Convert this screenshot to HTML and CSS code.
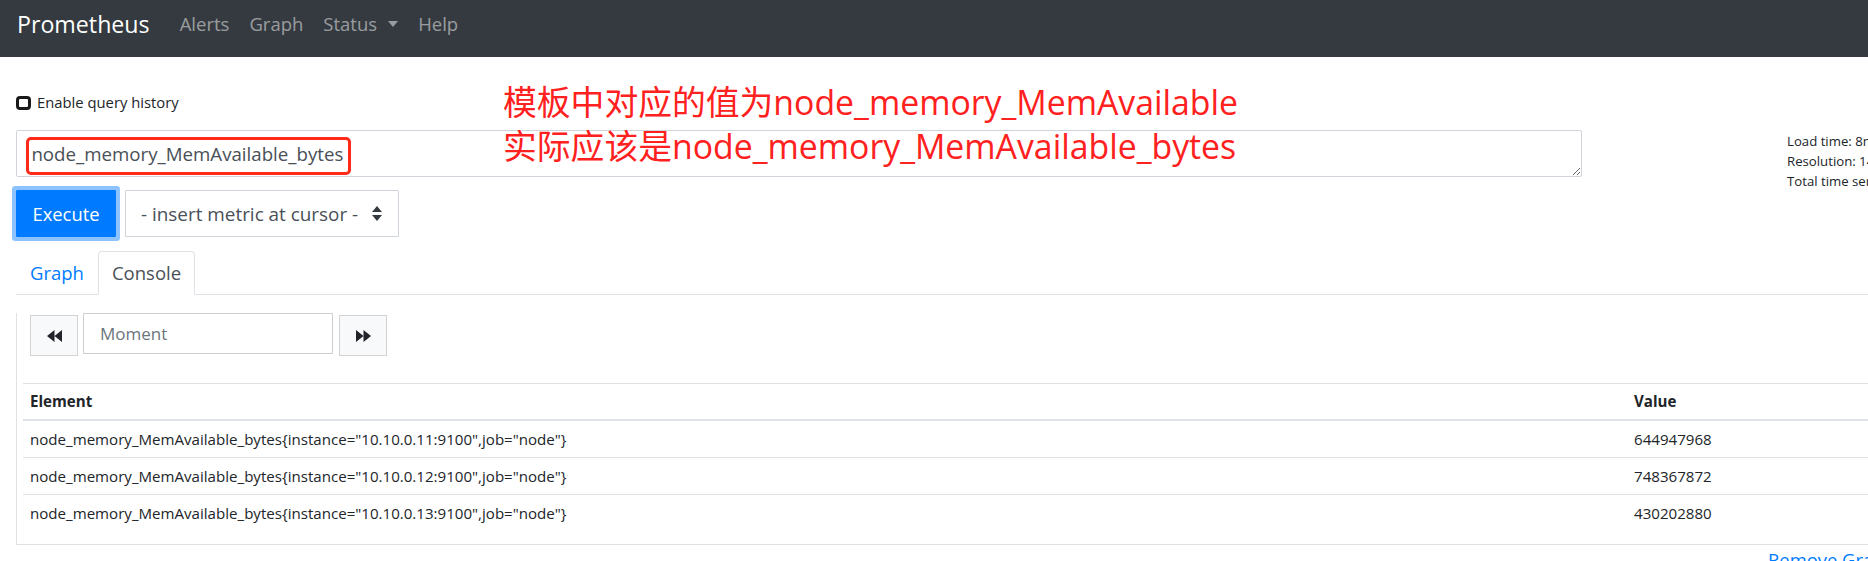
FILE: index.html
```html
<!DOCTYPE html>
<html lang="zh">
<head>
<meta charset="utf-8">
<title>Prometheus Time Series Collection and Processing Server</title>
<link rel="stylesheet" href="styles.css">
</head>
<body>
<nav class="navbar">
  <a class="brand" href="#">Prometheus</a>
  <ul class="nav-links">
    <li><a class="nav-link" href="#">Alerts</a></li>
    <li><a class="nav-link" href="#">Graph</a></li>
    <li><a class="nav-link" href="#">Status<span class="caret"></span></a></li>
    <li><a class="nav-link" href="#">Help</a></li>
  </ul>
</nav>
<main class="page">
  <div class="history">
    <span class="checkbox"></span>
    <span class="history-label">Enable query history</span>
  </div>
  <div class="query-row">
    <div class="query-box">
      <textarea class="expr" spellcheck="false">node_memory_MemAvailable_bytes</textarea>
      <div class="highlight"></div>
    </div>
    <div class="stats">
      <div>Load time: 8ms</div>
      <div>Resolution: 14s</div>
      <div>Total time series: 3</div>
    </div>
  </div>
  <div class="exec-row">
    <button class="btn-exec">Execute</button>
    <div class="metric-select">
      <span>- insert metric at cursor -</span>
      <svg class="updown" width="10" height="15" viewBox="0 0 10 15"><path d="M5 0 L10 6 H0 Z M5 15 L10 9 H0 Z" fill="#343a40"/></svg>
    </div>
  </div>
  <div class="annotation">
    <div>模板中对应的值为node_memory_MemAvailable</div>
    <div>实际应该是node_memory_MemAvailable_bytes</div>
  </div>
  <ul class="tabs">
    <li class="tab">Graph</li>
    <li class="tab active">Console</li>
  </ul>
  <div class="panel">
    <div class="time-controls">
      <button class="step-btn"><svg width="15" height="12" viewBox="0 0 15 12"><path d="M7.5 0 V12 L0 6 Z M15 0 V12 L7.5 6 Z" fill="#212529"/></svg></button>
      <input class="moment" placeholder="Moment">
      <button class="step-btn next"><svg width="15" height="12" viewBox="0 0 15 12"><path d="M0 0 V12 L7.5 6 Z M7.5 0 V12 L15 6 Z" fill="#212529"/></svg></button>
    </div>
    <table class="results">
      <colgroup><col class="col-element"><col class="col-value"></colgroup>
      <thead>
        <tr><th>Element</th><th>Value</th></tr>
      </thead>
      <tbody>
        <tr><td>node_memory_MemAvailable_bytes{instance="10.10.0.11:9100",job="node"}</td><td>644947968</td></tr>
        <tr><td>node_memory_MemAvailable_bytes{instance="10.10.0.12:9100",job="node"}</td><td>748367872</td></tr>
        <tr><td>node_memory_MemAvailable_bytes{instance="10.10.0.13:9100",job="node"}</td><td>430202880</td></tr>
      </tbody>
    </table>
  </div>
  <div class="footer-row">
    <a class="remove-link" href="#">Remove Graph</a>
  </div>
</main>
</body>
</html>
```
FILE: styles.css
```css
html, body {
  margin: 0;
  padding: 0;
  overflow: hidden;
  background: #fff;
}
body {
  font-family: "Open Sans", "Noto Sans CJK SC", sans-serif;
  color: #212529;
  width: 2300px;
}
a { text-decoration: none; }

/* navbar */
.navbar {
  display: flex;
  align-items: flex-start;
  box-sizing: border-box;
  height: 57px;
  background: #343a40;
  padding: 8px 0 0 17px;
}
.brand {
  color: #fff;
  font-size: 23.2px;
  line-height: 32px;
  margin-right: 20px;
}
.nav-links {
  display: flex;
  list-style: none;
  margin: 3px 0 0;
  padding: 0;
}
.nav-link {
  display: flex;
  align-items: center;
  padding: 0 10px;
  font-size: 18.5px;
  line-height: 25px;
  color: rgba(255, 255, 255, 0.5);
}
.caret {
  width: 0;
  height: 0;
  margin-left: 11px;
  border-top: 6px solid rgba(255, 255, 255, 0.5);
  border-left: 5.5px solid transparent;
  border-right: 5.5px solid transparent;
}

/* page */
.page {
  position: relative;
  padding: 35px 0 0 16px;
}
.history {
  display: flex;
  align-items: center;
  line-height: 21px;
  height: 21px;
}
.checkbox {
  box-sizing: border-box;
  width: 15px;
  height: 14px;
  border: 3px solid #1a1a1a;
  border-radius: 4px;
  margin-right: 6px;
}
.history-label {
  font-size: 14.8px;
}

.query-row {
  display: flex;
  align-items: flex-start;
  height: 47px;
  margin-top: 17px;
}
.query-box {
  position: relative;
}
.expr {
  display: block;
  box-sizing: border-box;
  width: 1566px;
  height: 47px;
  margin: 0;
  border: 1px solid #ced4da;
  border-radius: 2px;
  padding: 10px 14.4px 0;
  font-family: "Open Sans", sans-serif;
  font-size: 18.7px;
  line-height: 25px;
  color: #495057;
  overflow: hidden;
  resize: vertical;
}
.highlight {
  position: absolute;
  left: 10px;
  top: 7px;
  width: 325px;
  height: 38px;
  box-sizing: border-box;
  border: 3px solid #ff2a1a;
  border-radius: 5px;
  pointer-events: none;
}
.stats {
  margin-left: 205px;
  margin-top: 1px;
  font-size: 13.2px;
  line-height: 20px;
  white-space: nowrap;
}

.exec-row {
  display: flex;
  gap: 9px;
  margin-top: 13px;
}
.btn-exec {
  box-sizing: border-box;
  width: 100px;
  height: 47px;
  margin: 0;
  border: 1px solid #007bff;
  border-radius: 1px;
  background: #007bff;
  color: #fff;
  font-family: "Open Sans", sans-serif;
  font-size: 18.4px;
  box-shadow: 0 0 0 4px rgba(0, 123, 255, 0.45);
  padding: 0;
}
.metric-select {
  box-sizing: border-box;
  width: 274px;
  height: 47px;
  border: 1px solid #ced4da;
  border-radius: 1px;
  display: flex;
  align-items: center;
  padding: 0 16px 0 15px;
  font-size: 18.9px;
  color: #495057;
}
.updown {
  margin-left: auto;
}

.annotation {
  position: absolute;
  left: 503px;
  top: 23px;
  font-size: 33.8px;
  line-height: 44px;
  color: #ff2020;
  white-space: nowrap;
  font-family: "Open Sans", "Noto Sans CJK SC", sans-serif;
}

/* tabs */
.tabs {
  display: flex;
  list-style: none;
  margin: 14px 0 0;
  padding: 0;
  border-bottom: 1px solid #dee2e6;
}
.tab {
  box-sizing: border-box;
  height: 44px;
  line-height: 41px;
  padding: 0 13px;
  margin-bottom: -1px;
  border: 1px solid transparent;
  border-radius: 4px 4px 0 0;
  font-size: 18.5px;
  color: #007bff;
}
.tab.active {
  color: #495057;
  background: #fff;
  border-color: #dee2e6 #dee2e6 #fff;
}

/* panel */
.panel {
  border: 1px solid #dee2e6;
  border-top: none;
  padding: 0 6px 13px;
}
.time-controls {
  display: flex;
  align-items: flex-start;
  margin: 18px 0 0 7px;
}
.step-btn {
  box-sizing: border-box;
  width: 48px;
  height: 41px;
  margin: 2px 0 0;
  padding: 0;
  border: 1px solid #d3d3d3;
  border-radius: 0;
  background: #f8f9fa;
  display: flex;
  align-items: center;
  justify-content: center;
}
.moment {
  box-sizing: border-box;
  width: 250px;
  height: 41px;
  margin: 0 6px 0 5px;
  border: 1px solid #cfcfcf;
  border-radius: 0;
  padding: 0 0 0 16px;
  font-family: "Open Sans", sans-serif;
  font-size: 17px;
  color: #495057;
}
.moment::placeholder {
  color: #6c757d;
}

.results {
  margin-top: 27px;
  width: 2100px;
  border-collapse: separate;
  border-spacing: 0;
  font-size: 15.1px;
  table-layout: fixed;
}
.col-element { width: 1604px; }
.results th {
  text-align: left;
  font-weight: 700;
  padding: 0 7px;
  line-height: 35px;
  border-top: 1px solid #dee2e6;
  border-bottom: 2px solid #dee2e6;
}
.results td {
  padding: 0 7px;
  line-height: 36px;
  white-space: nowrap;
}
.results tbody tr + tr td {
  border-top: 1px solid #dee2e6;
}

.footer-row {
  margin-top: 1px;
  line-height: 27px;
}
.remove-link {
  margin-left: 1752px;
  font-size: 18.4px;
  color: #007bff;
}
```
